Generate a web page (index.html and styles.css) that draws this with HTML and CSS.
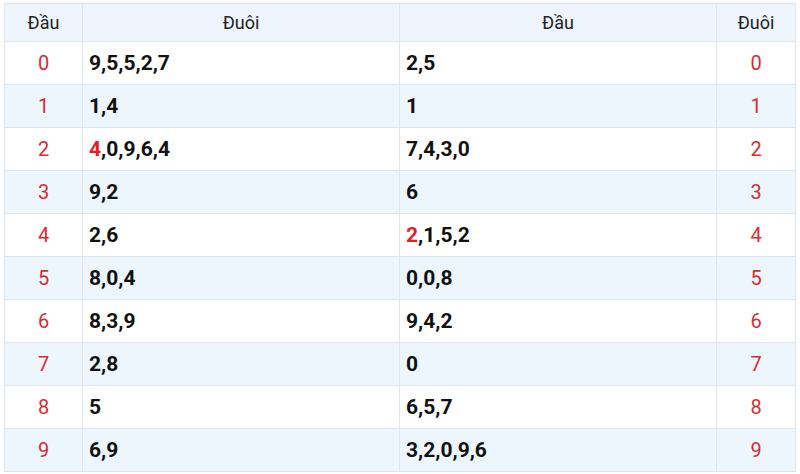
FILE: index.html
```html
<!DOCTYPE html>
<html lang="vi">
<head>
<meta charset="utf-8">
<link rel="stylesheet" href="styles.css">
</head>
<body>
<table class="lt">
  <colgroup>
    <col class="c-num"><col class="c-val"><col class="c-val"><col class="c-num2">
  </colgroup>
  <thead>
    <tr><th>Đầu</th><th>Đuôi</th><th>Đầu</th><th>Đuôi</th></tr>
  </thead>
  <tbody>
    <tr><td class="n">0</td><td class="v">9,5,5,2,7</td><td class="v">2,5</td><td class="n">0</td></tr>
    <tr><td class="n">1</td><td class="v">1,4</td><td class="v">1</td><td class="n">1</td></tr>
    <tr><td class="n">2</td><td class="v"><span class="hl">4</span>,0,9,6,4</td><td class="v">7,4,3,0</td><td class="n">2</td></tr>
    <tr><td class="n">3</td><td class="v">9,2</td><td class="v">6</td><td class="n">3</td></tr>
    <tr><td class="n">4</td><td class="v">2,6</td><td class="v"><span class="hl">2</span>,1,5,2</td><td class="n">4</td></tr>
    <tr><td class="n">5</td><td class="v">8,0,4</td><td class="v">0,0,8</td><td class="n">5</td></tr>
    <tr><td class="n">6</td><td class="v">8,3,9</td><td class="v">9,4,2</td><td class="n">6</td></tr>
    <tr><td class="n">7</td><td class="v">2,8</td><td class="v">0</td><td class="n">7</td></tr>
    <tr><td class="n">8</td><td class="v">5</td><td class="v">6,5,7</td><td class="n">8</td></tr>
    <tr><td class="n">9</td><td class="v">6,9</td><td class="v">3,2,0,9,6</td><td class="n">9</td></tr>
  </tbody>
</table>
</body>
</html>
```
FILE: styles.css
```css
html, body {
  margin: 0;
  padding: 0;
  background: #ffffff;
}
body {
  padding: 3px 5px 0 4px;
  font-family: Roboto, "Liberation Sans", sans-serif;
}
.lt {
  width: 791px;
  border-collapse: collapse;
  table-layout: fixed;
  border: 1px solid #dfe5ec;
}
.c-num { width: 78px; }
.c-val { width: 317px; }
.c-num2 { width: 79px; }
.lt th, .lt td {
  border: 1px solid #dfe5ec;
  padding: 0;
}
.lt th {
  height: 37px;
  background: #eef5fc;
  font-weight: 400;
  font-size: 18px;
  color: #222;
  text-align: center;
}
.lt td {
  height: 42px;
}
.lt tbody tr:nth-child(even) td {
  background: #eef6fd;
}
.n {
  text-align: center;
  color: #dc2a31;
  font-size: 20px;
}
.v {
  padding-left: 6px !important;
  font-weight: 700;
  font-size: 21px;
  color: #111;
}
.hl {
  color: #e0202a;
}
```
